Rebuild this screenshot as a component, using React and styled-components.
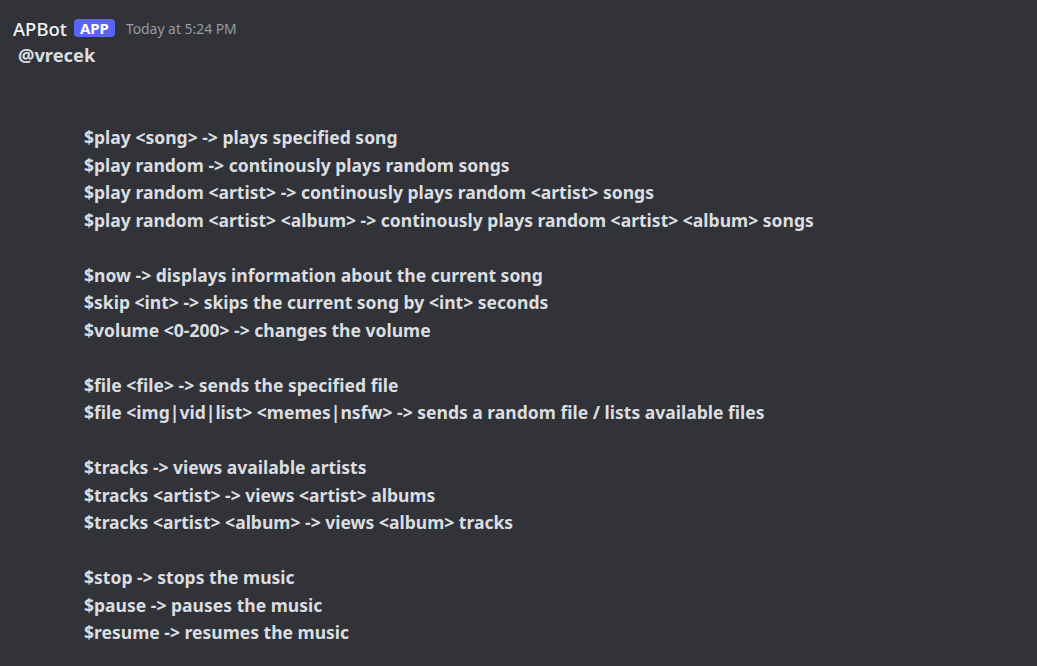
import React from 'react';
import styled, { createGlobalStyle } from 'styled-components';

const GlobalStyle = createGlobalStyle`
  html, body {
    margin: 0;
    padding: 0;
    background: #313338;
  }
  body {
    font-family: "Noto Sans", "Open Sans", sans-serif;
  }
`;

const groups = [
  [
    '$play <song> -> plays specified song',
    '$play random -> continously plays random songs',
    '$play random <artist> -> continously plays random <artist> songs',
    '$play random <artist> <album> -> continously plays random <artist> <album> songs',
  ],
  [
    '$now -> displays information about the current song',
    '$skip <int> -> skips the current song by <int> seconds',
    '$volume <0-200> -> changes the volume',
  ],
  [
    '$file <file> -> sends the specified file',
    '$file <img|vid|list> <memes|nsfw> -> sends a random file / lists available files',
  ],
  [
    '$tracks -> views available artists',
    '$tracks <artist> -> views <artist> albums',
    '$tracks <artist> <album> -> views <album> tracks',
  ],
  [
    '$stop -> stops the music',
    '$pause -> pauses the music',
    '$resume -> resumes the music',
  ],
];

function App() {
  return (
    <Page>
      <GlobalStyle />
      <Header>
        <Name>APBot</Name>
        <Badge>APP</Badge>
        <Time>Today at 5:24 PM</Time>
      </Header>
      <Mention>@vrecek</Mention>
      <Commands>
        {groups.map((group, i) => (
          <Group key={i}>
            {group.map((line) => (
              <Line key={line}>{line}</Line>
            ))}
          </Group>
        ))}
      </Commands>
    </Page>
  );
}

export default App;

const Page = styled.div`
  width: 1037px;
  height: 666px;
  background: #313338;
  color: #dbdee1;
  overflow: hidden;
  padding: 17px 0 0 13px;
  box-sizing: border-box;
`;

const Header = styled.div`
  display: flex;
  align-items: center;
  height: 22px;
`;

const Name = styled.span`
  font-size: 18.5px;
  color: #f2f3f5;
  font-weight: 500;
`;

const Badge = styled.span`
  margin-left: 7px;
  height: 18px;
  padding: 0 6px;
  border-radius: 4px;
  background: #5865f2;
  color: #fff;
  font-size: 15px;
  font-weight: 700;
  display: flex;
  align-items: center;
`;

const Time = styled.span`
  margin-left: 11px;
  font-size: 13.9px;
  color: #949ba4;
`;

const Mention = styled.div`
  margin: 2px 0 0 5px;
  font-size: 18.3px;
  font-weight: 700;
  line-height: 27px;
`;

const Commands = styled.div`
  margin: 56px 0 0 71px;
  display: flex;
  flex-direction: column;
  gap: 27.5px;
`;

const Group = styled.div`
  display: flex;
  flex-direction: column;
`;

const Line = styled.div`
  font-size: 17.55px;
  font-weight: 700;
  line-height: 27.5px;
  white-space: pre;
`;
